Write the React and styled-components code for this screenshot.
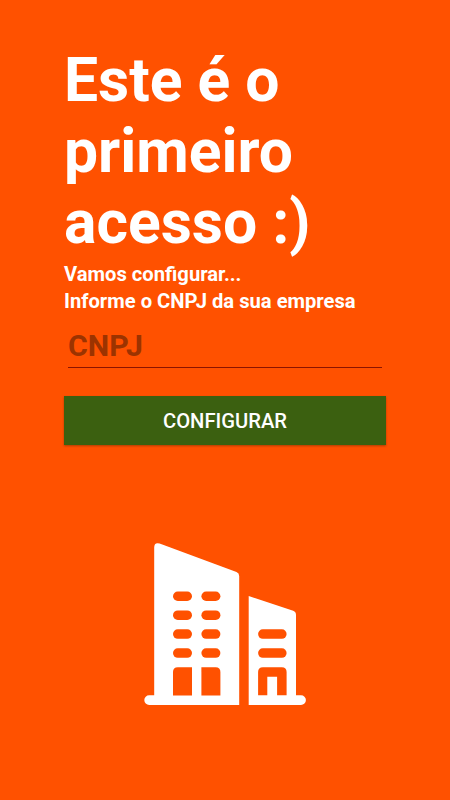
import React from "react";
import styled, { createGlobalStyle } from "styled-components";

const GlobalStyle = createGlobalStyle`
  * { box-sizing: border-box; }
  body { margin: 0; background: #ff5100; }
`;

const Screen = styled.main`
  display: flex;
  flex-direction: column;
  height: 800px;
  width: 450px;
  padding: 45px 64px 0;
  overflow: hidden;
  background: #ff5100;
  color: #fff;
  font-family: Roboto, sans-serif;
`;

const Title = styled.h1`
  margin: 0;
  font-size: 60.6px;
  line-height: 71px;
  font-weight: 700;
`;

const Subtitle = styled.p`
  margin: 3px 0 0;
  font-size: 20.2px;
  line-height: 27px;
  font-weight: 700;
  white-space: nowrap;
`;

const Field = styled.input`
  margin: 13px 4px 0;
  height: 40px;
  padding: 0 0 4px;
  border: 0;
  border-bottom: 1px solid #8c1400;
  border-radius: 0;
  outline: 0;
  background: transparent;
  color: #9c3300;
  font: 700 30.3px Roboto, sans-serif;
  &::placeholder {
    color: #9c3300;
    opacity: 1;
  }
`;

const Button = styled.button`
  height: 49px;
  margin: 28px 0 0;
  padding: 1px 0 0;
  border: 0;
  background: #3b6010;
  color: #fff;
  font: 500 20.2px Roboto, sans-serif;
  box-shadow: 0 1px 2px rgba(70, 40, 0, 0.45);
`;

const Illustration = styled.svg`
  display: block;
  align-self: center;
  width: 162px;
  height: 163px;
  margin-top: 98px;
`;

const floors = [591.5, 610.4, 629.3, 648.3];

function Buildings() {
  return (
    <Illustration viewBox="144 543 162 163" aria-hidden="true">
      <g fill="#fff">
        <path d="M154.2 695.2V547.5Q154.2 542 159.6 543.5L236.5 572Q239.2 573 239.2 576V705H149.2A4.9 4.9 0 0 1 149.2 695.2Z" />
        <path d="M248.7 596.1L293.2 610.8Q296 611.8 296 615V695.2H301A4.9 4.9 0 0 1 301 705H248.7Z" />
      </g>
      <g fill="#ff5100">
        {floors.map((y) => (
          <React.Fragment key={y}>
            <rect x="173" y={y} width="19" height="9.5" rx="4.75" />
            <rect x="201.4" y={y} width="19" height="9.5" rx="4.75" />
          </React.Fragment>
        ))}
        <rect x="258.1" y="629.3" width="28.5" height="9.5" rx="4.75" />
        <rect x="258.1" y="648.3" width="28.5" height="9.5" rx="4.75" />
        <path d="M173 695.5V672Q173 667.2 177.8 667.2H192V695.5Z" />
        <path d="M201.4 667.2H215.6Q220.4 667.2 220.4 672V695.5H201.4Z" />
        <path d="M258.1 695.3V672Q258.1 667.2 262.9 667.2H281.8Q286.6 667.2 286.6 672V695.3H277.1V676.8H267.3V695.3Z" />
      </g>
    </Illustration>
  );
}

export default function App() {
  return (
    <>
      <GlobalStyle />
      <Screen>
        <Title>Este é o primeiro acesso :)</Title>
        <Subtitle>
          Vamos configurar...
          <br />
          Informe o CNPJ da sua empresa
        </Subtitle>
        <Field placeholder="CNPJ" aria-label="CNPJ" />
        <Button type="button">CONFIGURAR</Button>
        <Buildings />
      </Screen>
    </>
  );
}
